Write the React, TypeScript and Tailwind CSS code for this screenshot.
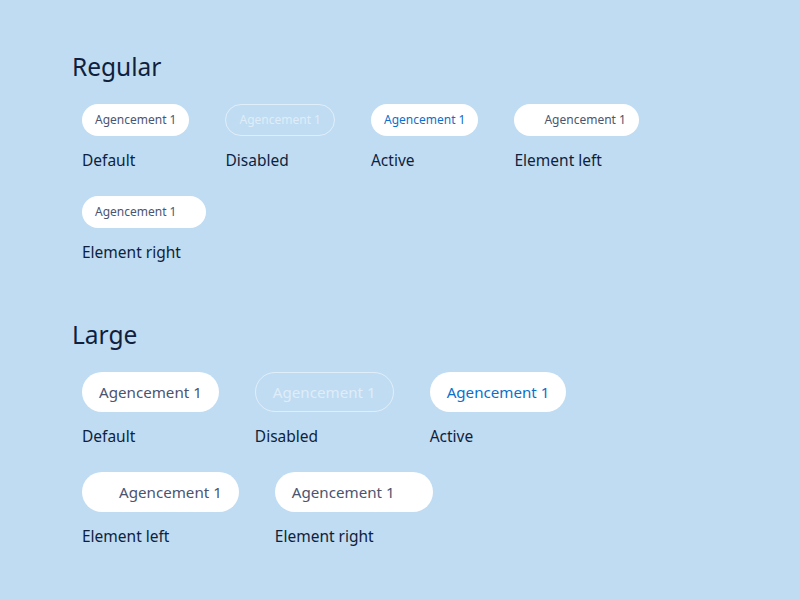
import React from 'react'

type Variant = 'default' | 'disabled' | 'active' | 'left' | 'right'
type Size = 'regular' | 'large'

const items: { variant: Variant; label: string }[] = [
  { variant: 'default', label: 'Default' },
  { variant: 'disabled', label: 'Disabled' },
  { variant: 'active', label: 'Active' },
  { variant: 'left', label: 'Element left' },
  { variant: 'right', label: 'Element right' },
]

function Chip({ variant, size }: { variant: Variant; size: Size }) {
  const isLarge = size === 'large'
  const base = isLarge
    ? 'h-10 px-[17px] text-[15.15px]'
    : 'h-8 px-[13px] text-[12px]'
  const look =
    variant === 'disabled'
      ? 'border border-white/50 text-white/50 bg-transparent'
      : variant === 'active'
        ? 'bg-white text-[#0b6fcc]'
        : 'bg-white text-[#4b5470]'

  return (
    <div className={`flex items-center rounded-full ${base} ${look}`}>
      {variant === 'left' && <span className={isLarge ? 'w-5' : 'w-[17px]'} />}
      <span className="whitespace-nowrap">Agencement 1</span>
      {variant === 'right' && <span className={isLarge ? 'w-[21px]' : 'w-[17px]'} />}
    </div>
  )
}

function Section({ title, size }: { title: string; size: Size }) {
  return (
    <section>
      <h2 className="text-[24.5px] leading-8 text-[#0f1f3d]">{title}</h2>
      <div className="mt-[21px] pl-[10px] flex flex-wrap gap-x-9 gap-y-6 max-w-[646px]">
        {items.map((it) => (
          <div key={it.variant} className="flex flex-col items-start">
            <Chip variant={it.variant} size={size} />
            <span className="mt-3 text-[15.5px] leading-6 text-[#0f1f3d]">{it.label}</span>
          </div>
        ))}
      </div>
    </section>
  )
}

export default function App() {
  return (
    <div
      className="w-[800px] h-[600px] bg-[#c0dcf2] pl-[72px] pt-[51px] flex flex-col gap-[55px]"
      style={{ fontFamily: '"Noto Sans", sans-serif' }}
    >
      <Section title="Regular" size="regular" />
      <Section title="Large" size="large" />
    </div>
  )
}
